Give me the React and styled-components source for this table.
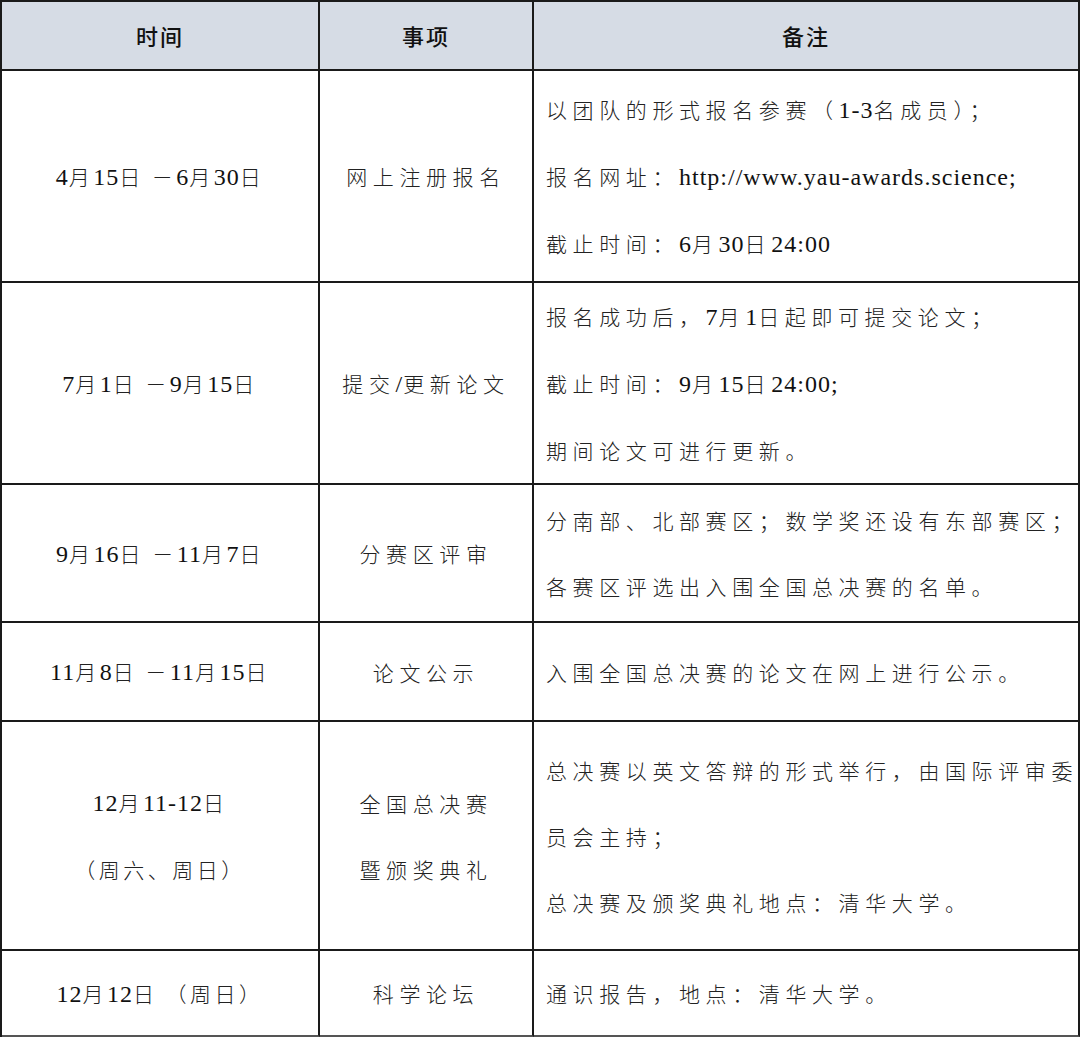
import React from 'react'
import styled, { createGlobalStyle } from 'styled-components'

const GlobalStyle = createGlobalStyle`
  html, body {
    margin: 0;
    padding: 0;
    background: #ffffff;
  }
  body {
    font-family: "Liberation Serif", "Noto Sans CJK SC", serif;
    color: #1c1c1c;
  }
`

const Table = styled.div`
  width: 1080px;
  box-sizing: border-box;
  border-top: 2px solid #1a1a1a;
  border-left: 2px solid #1a1a1a;
  display: grid;
  grid-template-columns: 318px 214px 1fr;
`

const Cell = styled.div`
  box-sizing: border-box;
  height: ${p => p.h}px;
  border-right: 2px solid #1a1a1a;
  border-bottom: 2px solid ${p => (p.last ? '#555' : '#1a1a1a')};
  background: ${p => (p.head ? '#d6dce5' : '#ffffff')};
  display: flex;
  flex-direction: column;
  justify-content: center;
  align-items: ${p => (p.left ? 'flex-start' : 'center')};
  padding: ${p => (p.left ? '0 0 0 12px' : '0')};
`

const HeadText = styled.div`
  font-family: "Noto Sans CJK SC", sans-serif;
  font-size: 22px;
  font-weight: 500;
  letter-spacing: 2px;
  color: #111;
  margin-bottom: 2px;
`

const Line = styled.div`
  font-family: "Noto Sans CJK SC", sans-serif;
  font-size: 21px;
  font-weight: 300;
  line-height: 66px;
  letter-spacing: ${p => (p.tight ? 3.5 : 5.6)}px;
  white-space: nowrap;
  color: #222;
`

const Latin = styled.span`
  font-family: "Liberation Serif", serif;
  font-size: 24px;
  font-weight: 400;
  letter-spacing: 1px;
  color: #111;
`

const Text = ({ children, tight }) => {
  const parts = children.split(/([0-9A-Za-z:/.\-;]+)/)
  return (
    <Line tight={tight}>
      {parts.map((part, i) =>
        i % 2 === 1 ? <Latin key={i}>{part}</Latin> : part
      )}
    </Line>
  )
}

const rows = [
  {
    h: 212,
    time: ['4月15日 －6月30日'],
    item: ['网上注册报名'],
    note: [
      '以团队的形式报名参赛（1-3名成员）；',
      '报名网址：http://www.yau-awards.science;',
      '截止时间：6月30日24:00',
    ],
  },
  {
    h: 202,
    time: ['7月1日 －9月15日'],
    item: ['提交/更新论文'],
    note: [
      '报名成功后，7月1日起即可提交论文；',
      '截止时间：9月15日24:00;',
      '期间论文可进行更新。',
    ],
  },
  {
    h: 138,
    time: ['9月16日 －11月7日'],
    item: ['分赛区评审'],
    note: ['分南部、北部赛区；数学奖还设有东部赛区；', '各赛区评选出入围全国总决赛的名单。'],
  },
  {
    h: 99,
    time: ['11月8日 －11月15日'],
    item: ['论文公示'],
    note: ['入围全国总决赛的论文在网上进行公示。'],
  },
  {
    h: 229,
    time: ['12月11-12日', '（周六、周日）'],
    item: ['全国总决赛', '暨颁奖典礼'],
    note: [
      '总决赛以英文答辩的形式举行，由国际评审委',
      '员会主持；',
      '总决赛及颁奖典礼地点：清华大学。',
    ],
  },
  {
    h: 86,
    time: ['12月12日 （周日）'],
    item: ['科学论坛'],
    note: ['通识报告，地点：清华大学。'],
  },
]

export default function App() {
  return (
    <>
      <GlobalStyle />
      <Table>
        <Cell head h={69}><HeadText>时间</HeadText></Cell>
        <Cell head h={69}><HeadText>事项</HeadText></Cell>
        <Cell head h={69}><HeadText>备注</HeadText></Cell>
        {rows.map((row, r) => {
          const last = r === rows.length - 1
          return (
            <React.Fragment key={r}>
              <Cell h={row.h} last={last}>
                {row.time.map((t, i) => <Text key={i} tight>{t}</Text>)}
              </Cell>
              <Cell h={row.h} last={last}>
                {row.item.map((t, i) => <Text key={i}>{t}</Text>)}
              </Cell>
              <Cell h={row.h} last={last} left>
                {row.note.map((t, i) => <Text key={i}>{t}</Text>)}
              </Cell>
            </React.Fragment>
          )
        })}
      </Table>
    </>
  )
}
